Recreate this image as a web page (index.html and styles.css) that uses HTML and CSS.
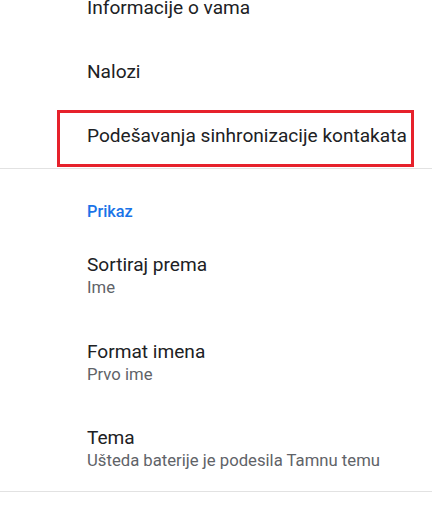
FILE: index.html
```html
<!DOCTYPE html>
<html lang="sr">
<head>
<meta charset="utf-8">
<title>Podešavanja</title>
<link rel="stylesheet" href="styles.css">
</head>
<body>
<div class="list">
  <div class="item"><div class="title">Informacije o vama</div></div>
  <div class="item"><div class="title">Nalozi</div></div>
  <div class="item highlighted"><div class="title">Podešavanja sinhronizacije kontakata</div></div>
  <div class="divider"></div>
  <div class="category">Prikaz</div>
  <div class="item two-line">
    <div class="title">Sortiraj prema</div>
    <div class="summary">Ime</div>
  </div>
  <div class="item two-line">
    <div class="title">Format imena</div>
    <div class="summary">Prvo ime</div>
  </div>
  <div class="item two-line">
    <div class="title">Tema</div>
    <div class="summary">Ušteda baterije je podesila Tamnu temu</div>
  </div>
  <div class="divider"></div>
</div>
</body>
</html>
```

FILE: styles.css
```css
html, body {
  margin: 0;
  padding: 0;
  background: #ffffff;
  overflow: hidden;
}

body {
  width: 432px;
  height: 525px;
  font-family: Roboto, "Noto Sans", "Liberation Sans", sans-serif;
}

.list {
  margin-top: -24px;
  display: flex;
  flex-direction: column;
}

.item {
  position: relative;
  padding: 19px 16px 19px 87px;
  display: flex;
  flex-direction: column;
}

.title {
  font-size: 19.1px;
  line-height: 26px;
  color: #202124;
  white-space: nowrap;
}

.item.two-line {
  padding-top: 21px;
  padding-bottom: 19.5px;
}

.summary {
  font-size: 16.7px;
  line-height: 20px;
  color: #5f6368;
  white-space: nowrap;
}

.highlighted::after {
  content: "";
  position: absolute;
  left: 57px;
  right: 18px;
  top: 6px;
  bottom: 1px;
  border: 3px solid #e6212b;
  box-sizing: border-box;
}

.divider {
  height: 1px;
  background: #e2e2e2;
}

.category {
  padding: 32.5px 16px 9.5px 87px;
  font-size: 16.3px;
  line-height: 20px;
  font-weight: 500;
  color: #1a73e8;
}
```
